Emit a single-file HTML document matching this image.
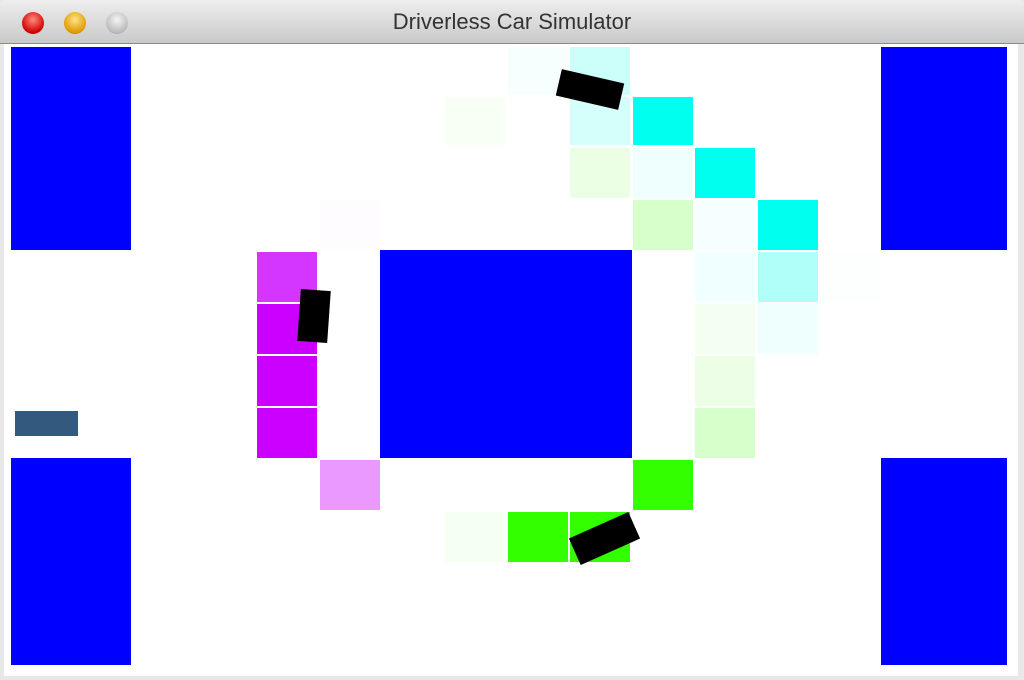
<!DOCTYPE html>
<html><head><style>
html,body{margin:0;padding:0;width:1024px;height:680px;overflow:hidden;background:#e8e8e8}
.tb{position:absolute;left:0;top:0;width:1024px;height:43px;background:linear-gradient(#eeeeee,#c9c9c9);border-radius:6px 6px 0 0;border-bottom:1px solid #8a8a8a}
.tt{position:absolute;left:0;width:1024px;top:9px;text-align:center;font:22px "Liberation Sans",sans-serif;color:#333}
.bt{position:absolute;top:12px;width:22px;height:22px;border-radius:50%}
.c{position:absolute;left:4px;top:44px;width:1014px;height:632px;background:#fff}
.r{position:absolute}
.car{position:absolute;background:#000}
</style></head><body>
<div class="tb">
<div class="bt" style="left:22px;background:radial-gradient(circle at 50% 35%,#ff8a80,#d10000 70%,#800)"></div>
<div class="bt" style="left:64px;background:radial-gradient(circle at 50% 35%,#ffe28a,#e09a00 70%,#8a5a00)"></div>
<div class="bt" style="left:106px;background:radial-gradient(circle at 50% 35%,#f4f4f4,#bbb 70%,#888)"></div>
<div class="tt">Driverless Car Simulator</div>
</div>
<div class="c"></div>
<div class="r" style="left:11px;top:47px;width:120px;height:203px;background:#0000ff"></div>
<div class="r" style="left:11px;top:458px;width:120px;height:207px;background:#0000ff"></div>
<div class="r" style="left:881px;top:47px;width:126px;height:203px;background:#0000ff"></div>
<div class="r" style="left:881px;top:458px;width:126px;height:207px;background:#0000ff"></div>
<div class="r" style="left:380px;top:250px;width:252px;height:208px;background:#0000ff"></div>
<div class="r" style="left:15px;top:411px;width:63px;height:25px;background:#335a7e"></div>

<div class="r" style="left:508px;top:47px;width:60px;height:48px;background:#f7fffe"></div>
<div class="r" style="left:570px;top:47px;width:60px;height:48px;background:#ccfffa"></div>
<div class="r" style="left:445px;top:97px;width:60px;height:48px;background:#f8fff5"></div>
<div class="r" style="left:570px;top:97px;width:60px;height:48px;background:#d5fffb"></div>
<div class="r" style="left:633px;top:97px;width:60px;height:48px;background:#00ffee"></div>
<div class="r" style="left:570px;top:148px;width:60px;height:50px;background:#ebffe5"></div>
<div class="r" style="left:633px;top:148px;width:60px;height:50px;background:#eefffe"></div>
<div class="r" style="left:695px;top:148px;width:60px;height:50px;background:#00ffee"></div>
<div class="r" style="left:320px;top:200px;width:60px;height:50px;background:#fffcff"></div>
<div class="r" style="left:633px;top:200px;width:60px;height:50px;background:#d7ffcc"></div>
<div class="r" style="left:695px;top:200px;width:60px;height:50px;background:#f5ffff"></div>
<div class="r" style="left:758px;top:200px;width:60px;height:50px;background:#00ffee"></div>
<div class="r" style="left:257px;top:252px;width:60px;height:50px;background:#d435ff"></div>
<div class="r" style="left:695px;top:252px;width:60px;height:50px;background:#f0ffff"></div>
<div class="r" style="left:758px;top:252px;width:60px;height:50px;background:#b0fff8"></div>
<div class="r" style="left:820px;top:252px;width:60px;height:50px;background:#fdfffe"></div>
<div class="r" style="left:257px;top:304px;width:60px;height:50px;background:#cc00ff"></div>
<div class="r" style="left:695px;top:304px;width:60px;height:50px;background:#f3fff0"></div>
<div class="r" style="left:758px;top:304px;width:60px;height:50px;background:#eefffe"></div>
<div class="r" style="left:257px;top:356px;width:60px;height:50px;background:#cc00ff"></div>
<div class="r" style="left:695px;top:356px;width:60px;height:50px;background:#ecffe6"></div>
<div class="r" style="left:257px;top:408px;width:60px;height:50px;background:#cc00ff"></div>
<div class="r" style="left:695px;top:408px;width:60px;height:50px;background:#d7ffcc"></div>
<div class="r" style="left:320px;top:460px;width:60px;height:50px;background:#ea99ff"></div>
<div class="r" style="left:633px;top:460px;width:60px;height:50px;background:#33ff00"></div>
<div class="r" style="left:445px;top:512px;width:60px;height:50px;background:#f5fff2"></div>
<div class="r" style="left:508px;top:512px;width:60px;height:50px;background:#33ff00"></div>
<div class="r" style="left:570px;top:512px;width:60px;height:50px;background:#33ff00"></div>

<div class="car" style="left:558px;top:76px;width:64px;height:27px;transform:rotate(13deg)"></div>
<div class="car" style="left:299px;top:290px;width:30px;height:52px;transform:rotate(4deg)"></div>
<div class="car" style="left:572px;top:524px;width:65px;height:29px;transform:rotate(-24deg)"></div>
</body></html>
